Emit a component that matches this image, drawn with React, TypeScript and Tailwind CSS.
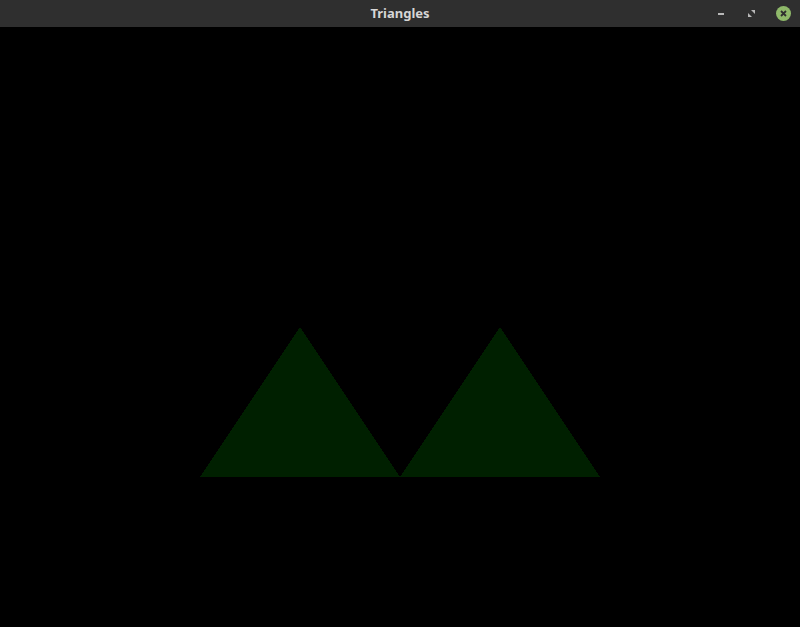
import React from 'react';

const TitleBar: React.FC = () => (
  <div className="relative flex h-[27px] items-center justify-center bg-[#2f2f2f]">
    <span className="text-[13px] font-bold text-[#d6d6d6]" style={{ fontFamily: '"Noto Sans", sans-serif' }}>
      Triangles
    </span>
    <div className="absolute right-0 top-0 flex h-[27px] items-center">
      <div className="flex w-[30px] justify-center">
        <div className="h-[2px] w-[6px] bg-[#b8b8b8]" />
      </div>
      <div className="flex w-[30px] justify-center">
        <svg width="7" height="7" viewBox="0 0 7 7">
          <path d="M3 0H7V4Z" fill="#b8b8b8" />
          <path d="M0 3V7H4Z" fill="#b8b8b8" />
        </svg>
      </div>
      <div className="flex w-[34px] justify-center">
        <div className="flex h-[15px] w-[15px] items-center justify-center rounded-full bg-[#8fb96a]">
          <svg width="7" height="7" viewBox="0 0 7 7">
            <path d="M1 1L6 6M6 1L1 6" stroke="#2f2f2f" strokeWidth="1.8" />
          </svg>
        </div>
      </div>
    </div>
  </div>
);

export default function App() {
  return (
    <div className="flex h-[627px] w-[800px] flex-col bg-black">
      <TitleBar />
      <div className="h-[600px] w-[800px]">
        <svg width="800" height="600" viewBox="0 0 800 600" shapeRendering="crispEdges">
          <polygon points="200,450 400,450 300,300" fill="#002000" />
          <polygon points="400,450 600,450 500,300" fill="#002000" />
        </svg>
      </div>
    </div>
  );
}
